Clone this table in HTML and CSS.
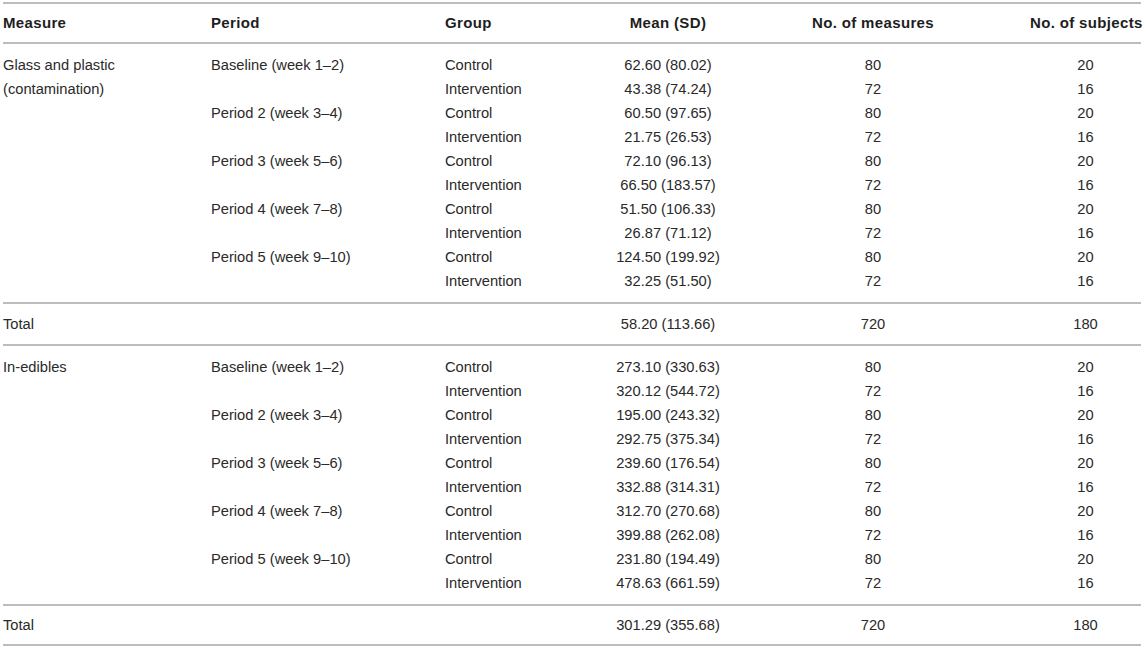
FILE: index.html
```html
<!DOCTYPE html>
<html>
<head>
<meta charset="utf-8">
<link rel="stylesheet" href="styles.css">
</head>
<body>
<table class="data">
  <colgroup>
    <col class="c1"><col class="c2"><col class="c3"><col class="c4"><col class="c5"><col class="c6">
  </colgroup>
  <thead>
    <tr>
      <th class="left">Measure</th>
      <th class="left">Period</th>
      <th class="left">Group</th>
      <th class="mid">Mean (SD)</th>
      <th class="mid">No. of measures</th>
      <th class="mid last-col">No. of subjects</th>
    </tr>
  </thead>
  <tbody>
    <tr class="first">
      <td rowspan="10">Glass and plastic<br>(contamination)</td>
      <td rowspan="2">Baseline (week 1–2)</td>
      <td>Control</td><td class="mid">62.60 (80.02)</td><td class="mid">80</td><td class="mid last-col">20</td>
    </tr>
    <tr><td>Intervention</td><td class="mid">43.38 (74.24)</td><td class="mid">72</td><td class="mid last-col">16</td></tr>
    <tr>
      <td rowspan="2">Period 2 (week 3–4)</td>
      <td>Control</td><td class="mid">60.50 (97.65)</td><td class="mid">80</td><td class="mid last-col">20</td>
    </tr>
    <tr><td>Intervention</td><td class="mid">21.75 (26.53)</td><td class="mid">72</td><td class="mid last-col">16</td></tr>
    <tr>
      <td rowspan="2">Period 3 (week 5–6)</td>
      <td>Control</td><td class="mid">72.10 (96.13)</td><td class="mid">80</td><td class="mid last-col">20</td>
    </tr>
    <tr><td>Intervention</td><td class="mid">66.50 (183.57)</td><td class="mid">72</td><td class="mid last-col">16</td></tr>
    <tr>
      <td rowspan="2">Period 4 (week 7–8)</td>
      <td>Control</td><td class="mid">51.50 (106.33)</td><td class="mid">80</td><td class="mid last-col">20</td>
    </tr>
    <tr><td>Intervention</td><td class="mid">26.87 (71.12)</td><td class="mid">72</td><td class="mid last-col">16</td></tr>
    <tr>
      <td rowspan="2">Period 5 (week 9–10)</td>
      <td>Control</td><td class="mid">124.50 (199.92)</td><td class="mid">80</td><td class="mid last-col">20</td>
    </tr>
    <tr class="last"><td>Intervention</td><td class="mid">32.25 (51.50)</td><td class="mid">72</td><td class="mid last-col">16</td></tr>
    <tr class="total">
      <td>Total</td><td></td><td></td><td class="mid">58.20 (113.66)</td><td class="mid">720</td><td class="mid last-col">180</td>
    </tr>
  </tbody>
  <tbody>
    <tr class="first">
      <td rowspan="10">In-edibles</td>
      <td rowspan="2">Baseline (week 1–2)</td>
      <td>Control</td><td class="mid">273.10 (330.63)</td><td class="mid">80</td><td class="mid last-col">20</td>
    </tr>
    <tr><td>Intervention</td><td class="mid">320.12 (544.72)</td><td class="mid">72</td><td class="mid last-col">16</td></tr>
    <tr>
      <td rowspan="2">Period 2 (week 3–4)</td>
      <td>Control</td><td class="mid">195.00 (243.32)</td><td class="mid">80</td><td class="mid last-col">20</td>
    </tr>
    <tr><td>Intervention</td><td class="mid">292.75 (375.34)</td><td class="mid">72</td><td class="mid last-col">16</td></tr>
    <tr>
      <td rowspan="2">Period 3 (week 5–6)</td>
      <td>Control</td><td class="mid">239.60 (176.54)</td><td class="mid">80</td><td class="mid last-col">20</td>
    </tr>
    <tr><td>Intervention</td><td class="mid">332.88 (314.31)</td><td class="mid">72</td><td class="mid last-col">16</td></tr>
    <tr>
      <td rowspan="2">Period 4 (week 7–8)</td>
      <td>Control</td><td class="mid">312.70 (270.68)</td><td class="mid">80</td><td class="mid last-col">20</td>
    </tr>
    <tr><td>Intervention</td><td class="mid">399.88 (262.08)</td><td class="mid">72</td><td class="mid last-col">16</td></tr>
    <tr>
      <td rowspan="2">Period 5 (week 9–10)</td>
      <td>Control</td><td class="mid">231.80 (194.49)</td><td class="mid">80</td><td class="mid last-col">20</td>
    </tr>
    <tr class="last"><td>Intervention</td><td class="mid">478.63 (661.59)</td><td class="mid">72</td><td class="mid last-col">16</td></tr>
    <tr class="total final">
      <td>Total</td><td></td><td></td><td class="mid">301.29 (355.68)</td><td class="mid">720</td><td class="mid last-col">180</td>
    </tr>
  </tbody>
</table>
</body>
</html>
```
FILE: styles.css
```css
html, body {
  margin: 0;
  padding: 0;
  background: #ffffff;
}

body {
  padding: 2px 0 0 3px;
  font-family: "Liberation Sans", Arial, sans-serif;
  color: #2a2a2a;
}

.data {
  border-collapse: collapse;
  table-layout: fixed;
  width: 1138px;
  font-size: 14.7px;
}

.c1 { width: 208px; }
.c2 { width: 234px; }
.c3 { width: 145px; }
.c4 { width: 156px; }
.c5 { width: 254px; }
.c6 { width: 141px; }

.data th,
.data td {
  padding: 0;
  line-height: 24px;
  vertical-align: top;
  text-align: left;
  white-space: nowrap;
}

.data th {
  font-weight: bold;
  font-size: 15px;
  letter-spacing: 0.35px;
  height: 38px;
  vertical-align: middle;
  border-top: 2px solid #bdbdbd;
  border-bottom: 2px solid #bdbdbd;
  color: #1e1e1e;
}

.data .mid {
  text-align: center;
}

.data .last-col {
  padding-left: 30px;
}

.data tr.first td {
  padding-top: 9px;
}

.data tr.last td {
  padding-bottom: 9px;
}

.data tr.total td {
  height: 40px;
  vertical-align: middle;
  border-top: 2px solid #bdbdbd;
  border-bottom: 2px solid #bdbdbd;
}

.data tr.final td {
  height: 38px;
}
```
